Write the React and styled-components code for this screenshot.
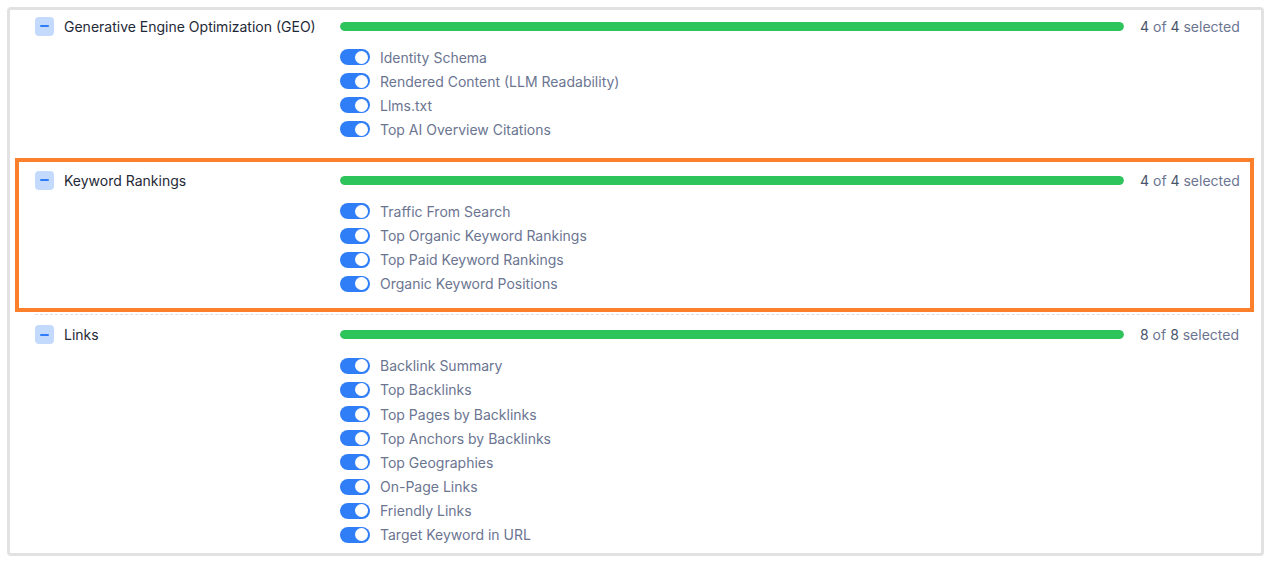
import React from 'react'
import styled, { createGlobalStyle } from 'styled-components'

const sections = [
    {
        title: 'Generative Engine Optimization (GEO)',
        items: ['Identity Schema', 'Rendered Content (LLM Readability)', 'Llms.txt', 'Top AI Overview Citations'],
    },
    {
        title: 'Keyword Rankings',
        highlight: true,
        items: ['Traffic From Search', 'Top Organic Keyword Rankings', 'Top Paid Keyword Rankings', 'Organic Keyword Positions'],
    },
    {
        title: 'Links',
        items: [
            'Backlink Summary',
            'Top Backlinks',
            'Top Pages by Backlinks',
            'Top Anchors by Backlinks',
            'Top Geographies',
            'On-Page Links',
            'Friendly Links',
            'Target Keyword in URL',
        ],
    },
]

const App = () => {
    return (
        <>
            <GlobalStyle />
            <Card>
                {sections.map((section) => (
                    <Section key={section.title} $highlight={section.highlight}>
                        <Header>
                            <TitleCell>
                                <CollapseButton />
                                <Title>{section.title}</Title>
                            </TitleCell>
                            <Progress>
                                <ProgressFill style={{ width: '100%' }} />
                            </Progress>
                            <Count>
                                <Num>{section.items.length}</Num> of <Num>{section.items.length}</Num> selected
                            </Count>
                        </Header>
                        <ItemList>
                            {section.items.map((item) => (
                                <Item key={item}>
                                    <Toggle />
                                    <ItemLabel>{item}</ItemLabel>
                                </Item>
                            ))}
                        </ItemList>
                    </Section>
                ))}
            </Card>
        </>
    )
}

const GlobalStyle = createGlobalStyle`
    body {
        margin: 0;
        padding: 7px;
        background: #ffffff;
        font-family: Inter, 'Noto Sans', sans-serif;
    }
`

// outer bordered panel
const Card = styled.div`
    width: 1257px;
    height: 549px;
    box-sizing: border-box;
    border: 3px solid #e2e2e2;
    border-radius: 4px;
    padding: 0 21px 0 25px;
    overflow: hidden;
`

// one group of toggles, dashed line between groups
const Section = styled.div`
    position: relative;
    padding: 10px 0 20px;
    border-top: 1px dashed #dcdfe6;

    &:first-child {
        border-top: none;
        padding-top: 6px;
    }

    &:last-child {
        padding-bottom: 8px;
    }

    ${(p) => p.$highlight && `
        &::after {
            content: '';
            position: absolute;
            top: -2px;
            left: -20px;
            right: -14px;
            bottom: 2px;
            border: 4px solid #fc802c;
            pointer-events: none;
        }
    `}
`

const Header = styled.div`
    display: flex;
    align-items: center;
    height: 20px;
`

const TitleCell = styled.div`
    display: flex;
    align-items: center;
    gap: 10px;
    width: 305px;
    flex-shrink: 0;
`

// light blue square with a dash
const CollapseButton = styled.span`
    position: relative;
    width: 19px;
    height: 19px;
    border-radius: 4px;
    background: #c4dafd;

    &::before {
        content: '';
        position: absolute;
        left: 5px;
        top: 8.5px;
        width: 9px;
        height: 2px;
        border-radius: 1px;
        background: #2f7cf6;
    }
`

const Title = styled.span`
    font-size: 14px;
    color: #1f2937;
`

const Progress = styled.div`
    flex: 1;
    height: 9px;
    border-radius: 5px;
    background: #e5e7eb;
    overflow: hidden;
`

const ProgressFill = styled.div`
    height: 100%;
    border-radius: 5px;
    background: #2ec45c;
`

const Count = styled.span`
    width: 100px;
    margin-left: 16px;
    font-size: 14px;
    color: #6b7591;
    white-space: nowrap;
`

const Num = styled.span`
    color: #475569;
`

const ItemList = styled.div`
    display: flex;
    flex-direction: column;
    gap: 4.15px;
    margin-top: 11px;
    margin-left: 305px;
`

const Item = styled.div`
    display: flex;
    align-items: center;
    gap: 10px;
    height: 20px;
`

// switch in the on state
const Toggle = styled.span`
    position: relative;
    width: 30px;
    height: 16px;
    border-radius: 8px;
    background: #2f7ef7;
    flex-shrink: 0;

    &::after {
        content: '';
        position: absolute;
        top: 1.5px;
        right: 2px;
        width: 13px;
        height: 13px;
        border-radius: 50%;
        background: #ffffff;
    }
`

const ItemLabel = styled.span`
    font-size: 14px;
    color: #6b7591;
`

export default App
